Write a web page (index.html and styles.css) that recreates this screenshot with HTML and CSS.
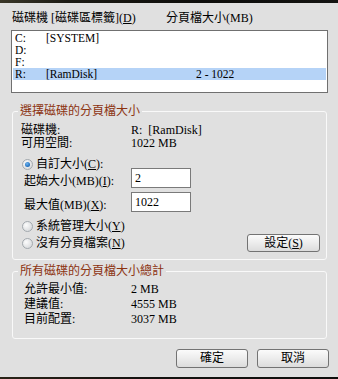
FILE: index.html
```
<!DOCTYPE html>
<html lang="zh-TW">
<head>
  <meta charset="UTF-8">
  <title>虛擬記憶體</title>
  <link rel="stylesheet" href="styles.css">
</head>
<body>
  <div class="topbar"></div>
  <div class="dialog">
    <div class="list-head">
      <span class="head-drive">磁碟機 [磁碟區標籤](<u>D</u>)</span>
      <span>分頁檔大小(MB)</span>
    </div>
    <div class="listbox">
      <div class="list-row"><span class="col-letter">C:</span><span class="col-label">[SYSTEM]</span><span></span></div>
      <div class="list-row"><span class="col-letter">D:</span><span class="col-label"></span><span></span></div>
      <div class="list-row"><span class="col-letter">F:</span><span class="col-label"></span><span></span></div>
      <div class="list-row selected"><span class="col-letter">R:</span><span class="col-label">[RamDisk]</span><span>2 - 1022</span></div>
    </div>

    <fieldset class="group">
      <legend>選擇磁碟的分頁檔大小</legend>
      <div class="info">
        <div class="info-row"><span class="info-label">磁碟機:</span><span>R:&nbsp; [RamDisk]</span></div>
        <div class="info-row"><span class="info-label">可用空間:</span><span>1022 MB</span></div>
      </div>
      <div class="radio-row first"><span class="radio checked"></span>自訂大小(<u>C</u>):</div>
      <div class="field-row first">
        <span class="field-label">起始大小(MB)(<u>I</u>):</span>
        <input class="field" type="text" value="2">
      </div>
      <div class="field-row">
        <span class="field-label">最大值(MB)(<u>X</u>):</span>
        <input class="field" type="text" value="1022">
      </div>
      <div class="radio-row second"><span class="radio"></span>系統管理大小(<u>Y</u>)</div>
      <div class="radio-row last">
        <span class="radio"></span>沒有分頁檔案(<u>N</u>)
        <button class="btn btn-set">設定(<u>S</u>)</button>
      </div>
    </fieldset>

    <fieldset class="group totals">
      <legend>所有磁碟的分頁檔大小總計</legend>
      <div class="total-row"><span class="total-label">允許最小值:</span><span>2 MB</span></div>
      <div class="total-row"><span class="total-label">建議值:</span><span>4555 MB</span></div>
      <div class="total-row"><span class="total-label">目前配置:</span><span>3037 MB</span></div>
    </fieldset>

    <div class="actions">
      <button class="btn">確定</button>
      <button class="btn">取消</button>
    </div>
  </div>
  <div class="bottombar"></div>
</body>
</html>
```

FILE: styles.css
```
* { box-sizing: border-box; }
body {
  margin: 0;
  background: #e0e0e0;
  color: #000;
  font-family: "Liberation Serif", "Noto Sans CJK TC", serif;
  font-size: 12px;
  line-height: 14px;
}
u { text-decoration: underline; text-underline-offset: 1px; }
.topbar {
  height: 3px;
  background: linear-gradient(90deg, #3a3728, #1b1a14 20%, #0d0d0b 60%, #141412);
}
.bottombar {
  height: 2px;
  background: linear-gradient(90deg, #2a2418, #151310 40%, #0e0e0c);
}
.dialog {
  height: 374px;
  padding: 8px 9px 0 11px;
}
.list-head {
  display: flex;
  padding-left: 1px;
}
.head-drive {
  width: 154px;
}
.listbox {
  margin-top: 5px;
  width: 317px;
  height: 63px;
  padding: 1px;
  background: #fff;
  border: 1px solid #707070;
}
.list-row {
  display: flex;
  align-items: center;
  height: 12px;
  font-size: 11.5px;
  line-height: 11px;
}
.list-row.selected {
  background: #b5d3f7;
}
.col-letter {
  width: 33px;
  padding-left: 2px;
}
.col-label {
  width: 150px;
}
.group {
  width: 315px;
  margin: 11px 0 0 1px;
  padding: 0 6px 7px 8px;
  border: 1px solid #f9f9f9;
  border-radius: 3px;
  min-inline-size: 0;
}
.group legend {
  margin-left: -3px;
  padding: 0 2px;
  color: #8c3311;
  line-height: 14px;
}
.info {
  margin-top: 6px;
}
.info-row {
  display: flex;
  line-height: 13px;
}
.info-label {
  width: 110px;
}
.radio-row {
  display: flex;
  align-items: center;
  height: 14px;
  padding-left: 1px;
}
.radio-row.first { margin-top: 7px; }
.radio-row.second { margin-top: 7px; }
.radio-row.last { height: 18px; margin-top: 1px; }
.radio {
  width: 11px;
  height: 11px;
  margin-right: 3px;
  border-radius: 50%;
  border: 1px solid #a3a9ae;
  background: radial-gradient(circle at 35% 35%, #fcfcfc, #dadcde 75%);
  position: relative;
}
.radio.checked::after {
  content: "";
  position: absolute;
  left: 2px;
  top: 2px;
  width: 5px;
  height: 5px;
  border-radius: 50%;
  background: radial-gradient(circle at 40% 35%, #6fb4f0, #1262b4 80%);
}
.field-row {
  display: flex;
  align-items: center;
  height: 20px;
  margin-top: 4px;
  padding-left: 3px;
}
.field-row.first { margin-top: -3px; }
.field-label {
  width: 107px;
  padding-top: 5px;
}
.field {
  width: 60px;
  height: 20px;
  padding: 0 3px;
  margin: 0;
  border: 1px solid #7a7a7a;
  background: #fff;
  font: inherit;
  line-height: 18px;
}
.btn {
  height: 19px;
  width: 72px;
  padding: 0;
  border: 1px solid #737373;
  border-radius: 3px;
  background: linear-gradient(#fbfbfb, #ececec 50%, #dcdcdc);
  font: inherit;
  line-height: 17px;
  color: #000;
}
.btn-set {
  margin-left: auto;
  width: 73px;
  height: 18px;
  line-height: 16px;
}
.totals {
  margin-top: 4px;
  padding-bottom: 11px;
}
.total-row {
  display: flex;
  line-height: 15px;
  padding-left: 3px;
}
.total-row:first-of-type {
  margin-top: 4px;
}
.total-label {
  width: 107px;
}
.actions {
  display: flex;
  justify-content: flex-end;
  gap: 9px;
  margin-top: 10px;
}
```
